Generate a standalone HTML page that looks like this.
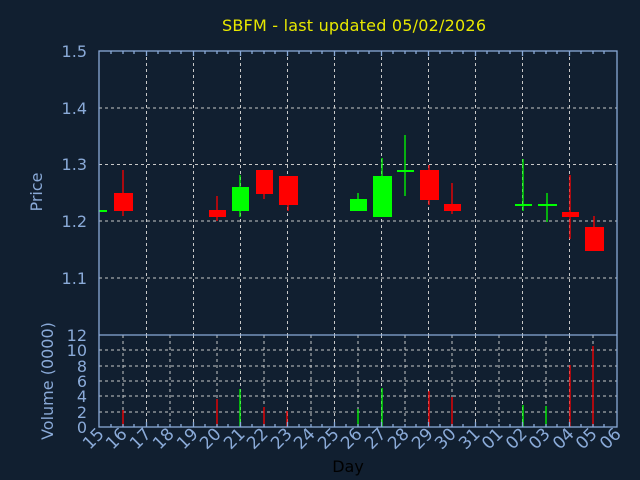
<!DOCTYPE html><html><head><style>html,body{margin:0;padding:0;background:#111f30}svg{display:block}text{font-family:"DejaVu Sans","Liberation Sans",sans-serif}</style></head><body>
<svg width="640" height="480" viewBox="0 0 640 480" xmlns="http://www.w3.org/2000/svg">
<rect width="640" height="480" fill="#111f30"/>
<text x="354" y="31" font-size="16" fill="#e8e800" text-anchor="middle" textLength="264">SBFM - last updated 05/02/2026</text>
<g stroke="#c8c8c8" stroke-width="1" stroke-dasharray="3,3">
<line x1="99" y1="108" x2="617" y2="108"/><line x1="99" y1="164.5" x2="617" y2="164.5"/><line x1="99" y1="221" x2="617" y2="221"/><line x1="99" y1="278" x2="617" y2="278"/>
<line x1="146.5" y1="51" x2="146.5" y2="335"/><line x1="193.5" y1="51" x2="193.5" y2="335"/><line x1="240.5" y1="51" x2="240.5" y2="335"/><line x1="287.5" y1="51" x2="287.5" y2="335"/><line x1="334.5" y1="51" x2="334.5" y2="335"/><line x1="381.5" y1="51" x2="381.5" y2="335"/><line x1="428.5" y1="51" x2="428.5" y2="335"/><line x1="475.5" y1="51" x2="475.5" y2="335"/><line x1="522.5" y1="51" x2="522.5" y2="335"/><line x1="569.5" y1="51" x2="569.5" y2="335"/>
<line x1="99" y1="350" x2="617" y2="350"/><line x1="99" y1="366" x2="617" y2="366"/><line x1="99" y1="381" x2="617" y2="381"/><line x1="99" y1="396" x2="617" y2="396"/><line x1="99" y1="412" x2="617" y2="412"/>
<line x1="123" y1="335" x2="123" y2="427"/><line x1="170" y1="335" x2="170" y2="427"/><line x1="217" y1="335" x2="217" y2="427"/><line x1="264" y1="335" x2="264" y2="427"/><line x1="311" y1="335" x2="311" y2="427"/><line x1="358" y1="335" x2="358" y2="427"/><line x1="405" y1="335" x2="405" y2="427"/><line x1="452" y1="335" x2="452" y2="427"/><line x1="499" y1="335" x2="499" y2="427"/><line x1="546" y1="335" x2="546" y2="427"/><line x1="593" y1="335" x2="593" y2="427"/>
<line x1="146.5" y1="335" x2="146.5" y2="427"/><line x1="193.5" y1="335" x2="193.5" y2="427"/><line x1="240.5" y1="335" x2="240.5" y2="427"/><line x1="287.5" y1="335" x2="287.5" y2="427"/><line x1="334.5" y1="335" x2="334.5" y2="427"/><line x1="381.5" y1="335" x2="381.5" y2="427"/><line x1="428.5" y1="335" x2="428.5" y2="427"/><line x1="475.5" y1="335" x2="475.5" y2="427"/><line x1="522.5" y1="335" x2="522.5" y2="427"/><line x1="569.5" y1="335" x2="569.5" y2="427"/>
</g>
<g stroke-width="1.3">
<rect x="99" y="210" width="8" height="2" fill="#00ff00"/>
<line x1="123" y1="170" x2="123" y2="216" stroke="#ff0000"/><rect x="114" y="193" width="19" height="18" fill="#ff0000"/>
<line x1="217" y1="196" x2="217" y2="221" stroke="#ff0000"/><rect x="209" y="210" width="17" height="7" fill="#ff0000"/>
<line x1="240" y1="175" x2="240" y2="217" stroke="#00ff00"/><rect x="232" y="187" width="17" height="24" fill="#00ff00"/>
<line x1="264" y1="170" x2="264" y2="199" stroke="#ff0000"/><rect x="256" y="170" width="17" height="24" fill="#ff0000"/>
<line x1="288" y1="176" x2="288" y2="211" stroke="#ff0000"/><rect x="279" y="176" width="19" height="29" fill="#ff0000"/>
<line x1="358" y1="193" x2="358" y2="211" stroke="#00ff00"/><rect x="350" y="199" width="17" height="12" fill="#00ff00"/>
<line x1="382" y1="158" x2="382" y2="217" stroke="#00ff00"/><rect x="373" y="176" width="19" height="41" fill="#00ff00"/>
<line x1="405" y1="135" x2="405" y2="196" stroke="#00ff00"/><rect x="397" y="170" width="17" height="2" fill="#00ff00"/>
<line x1="429" y1="165" x2="429" y2="205" stroke="#ff0000"/><rect x="420" y="170" width="19" height="30" fill="#ff0000"/>
<line x1="452" y1="183" x2="452" y2="214" stroke="#ff0000"/><rect x="444" y="204" width="17" height="7" fill="#ff0000"/>
<line x1="523" y1="159" x2="523" y2="211" stroke="#00ff00"/><rect x="515" y="204" width="17" height="2" fill="#00ff00"/>
<line x1="547" y1="193" x2="547" y2="222" stroke="#00ff00"/><rect x="538" y="204" width="19" height="2" fill="#00ff00"/>
<line x1="570" y1="175" x2="570" y2="239" stroke="#ff0000"/><rect x="562" y="212" width="17" height="5" fill="#ff0000"/>
<line x1="594" y1="216" x2="594" y2="227" stroke="#ff0000"/><rect x="585" y="227" width="19" height="24" fill="#ff0000"/>
</g>
<g stroke-width="1.3">
<line x1="123" y1="427" x2="123" y2="410" stroke="#ff0000"/>
<line x1="217" y1="427" x2="217" y2="399" stroke="#ff0000"/>
<line x1="240" y1="427" x2="240" y2="389" stroke="#00ff00"/>
<line x1="264" y1="427" x2="264" y2="407" stroke="#ff0000"/>
<line x1="287" y1="427" x2="287" y2="411" stroke="#ff0000"/>
<line x1="358" y1="427" x2="358" y2="409" stroke="#00ff00"/>
<line x1="382" y1="427" x2="382" y2="388" stroke="#00ff00"/>
<line x1="429" y1="427" x2="429" y2="391" stroke="#ff0000"/>
<line x1="452" y1="427" x2="452" y2="397" stroke="#ff0000"/>
<line x1="523" y1="427" x2="523" y2="405" stroke="#00ff00"/>
<line x1="546" y1="427" x2="546" y2="406" stroke="#00ff00"/>
<line x1="570" y1="427" x2="570" y2="365" stroke="#ff0000"/>
<line x1="593" y1="427" x2="593" y2="346" stroke="#ff0000"/>
</g>
<g stroke="#8aaad8" fill="none" stroke-width="1.3">
<rect x="99" y="51" width="518" height="376"/>
<line x1="99" y1="335" x2="617" y2="335"/>
<path d="M111,51v3M123,51v3M134,51v3M146.5,51v5M158,51v3M170,51v3M181,51v3M193.5,51v5M205,51v3M217,51v3M228,51v3M240.5,51v5M252,51v3M264,51v3M275,51v3M287.5,51v5M299,51v3M311,51v3M322,51v3M334.5,51v5M346,51v3M358,51v3M369,51v3M381.5,51v5M393,51v3M405,51v3M416,51v3M428.5,51v5M440,51v3M452,51v3M463,51v3M475.5,51v5M487,51v3M499,51v3M510,51v3M522.5,51v5M534,51v3M546,51v3M557,51v3M569.5,51v5M581,51v3M593,51v3M604,51v3"/>
<path d="M111,427v-3M123,427v-3M134,427v-3M146.5,427v-5M158,427v-3M170,427v-3M181,427v-3M193.5,427v-5M205,427v-3M217,427v-3M228,427v-3M240.5,427v-5M252,427v-3M264,427v-3M275,427v-3M287.5,427v-5M299,427v-3M311,427v-3M322,427v-3M334.5,427v-5M346,427v-3M358,427v-3M369,427v-3M381.5,427v-5M393,427v-3M405,427v-3M416,427v-3M428.5,427v-5M440,427v-3M452,427v-3M463,427v-3M475.5,427v-5M487,427v-3M499,427v-3M510,427v-3M522.5,427v-5M534,427v-3M546,427v-3M557,427v-3M569.5,427v-5M581,427v-3M593,427v-3M604,427v-3"/>
</g>
<g fill="#8aaad8" font-size="16" text-anchor="end">
<text x="87" y="57">1.5</text><text x="87" y="114">1.4</text><text x="87" y="170">1.3</text><text x="87" y="227">1.2</text><text x="87" y="284">1.1</text>
<text x="87" y="341">12</text><text x="87" y="356">10</text><text x="87" y="372">8</text><text x="87" y="387">6</text><text x="87" y="402">4</text><text x="87" y="418">2</text><text x="87" y="433">0</text>
</g>
<text transform="translate(42,192) rotate(-90)" font-size="16" fill="#8aaad8" text-anchor="middle">Price</text>
<text transform="translate(53,381) rotate(-90)" font-size="16" fill="#8aaad8" text-anchor="middle">Volume (0000)</text>
<text x="348" y="472" font-size="16" fill="#000" text-anchor="middle">Day</text>
<g fill="#8aaad8" font-size="17" text-anchor="end">
<text transform="translate(105,435) rotate(-45)">15</text>
<text transform="translate(128,435) rotate(-45)">16</text>
<text transform="translate(152,435) rotate(-45)">17</text>
<text transform="translate(175,435) rotate(-45)">18</text>
<text transform="translate(199,435) rotate(-45)">19</text>
<text transform="translate(222,435) rotate(-45)">20</text>
<text transform="translate(246,435) rotate(-45)">21</text>
<text transform="translate(269,435) rotate(-45)">22</text>
<text transform="translate(293,435) rotate(-45)">23</text>
<text transform="translate(316,435) rotate(-45)">24</text>
<text transform="translate(340,435) rotate(-45)">25</text>
<text transform="translate(363,435) rotate(-45)">26</text>
<text transform="translate(387,435) rotate(-45)">27</text>
<text transform="translate(410,435) rotate(-45)">28</text>
<text transform="translate(434,435) rotate(-45)">29</text>
<text transform="translate(457,435) rotate(-45)">30</text>
<text transform="translate(481,435) rotate(-45)">31</text>
<text transform="translate(504,435) rotate(-45)">01</text>
<text transform="translate(528,435) rotate(-45)">02</text>
<text transform="translate(551,435) rotate(-45)">03</text>
<text transform="translate(575,435) rotate(-45)">04</text>
<text transform="translate(598,435) rotate(-45)">05</text>
<text transform="translate(622,435) rotate(-45)">06</text>
</g>
</svg>
</body></html>
